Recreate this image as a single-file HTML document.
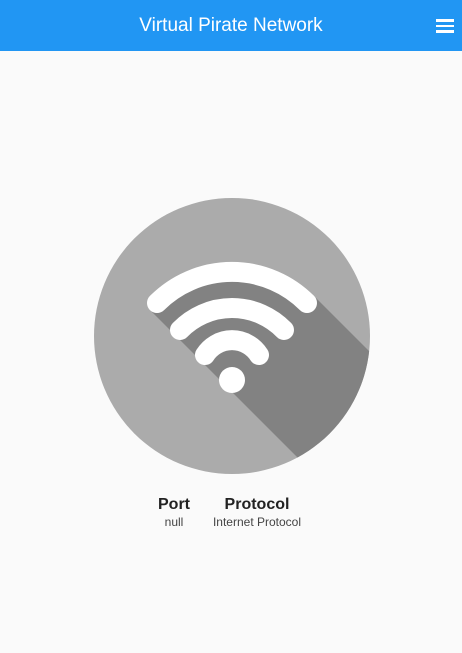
<!DOCTYPE html>
<html><head><style>
body{margin:0;width:462px;height:653px;background:#fafafa;font-family:"Liberation Sans",sans-serif;overflow:hidden;position:relative}
.bar{position:absolute;left:0;top:0;width:462px;height:51px;background:#2196f3;color:#fff;font-size:19px;text-align:center;line-height:51px}
.menu{position:absolute;right:8px;top:19px;width:18px}
.menu div{height:2.5px;background:#fff;margin-bottom:3px}
.col{position:absolute;text-align:center;color:#222}
.col b{display:block;font-size:16px}
.col span{display:block;font-size:12px;color:#444;margin-top:1px}
</style></head><body>
<div class="bar">Virtual Pirate Network<div class="menu"><div></div><div></div><div></div></div></div>
<svg style="position:absolute;left:0;top:0" width="462" height="653">
<defs><clipPath id="c"><circle cx="232" cy="336" r="138"/></clipPath></defs>
<circle cx="232" cy="336" r="138" fill="#ababab"/>
<polygon clip-path="url(#c)" points="150,310 162,298 195,280 232,272 270,280 305,300 314,296 514,496 350,510" fill="#828282"/>
<g fill="none" stroke="#fff" stroke-width="20" stroke-linecap="round">
<path d="M157,303 A106,106 0 0 1 307,303"/>
<path d="M180,330 A72.5,72.5 0 0 1 284,330"/>
<path d="M205,355 A32,32 0 0 1 259,355"/>
</g>
<circle cx="232" cy="380" r="13" fill="#fff"/>
</svg>
<div class="col" style="left:150px;top:496px;width:48px"><b>Port</b><span>null</span></div>
<div class="col" style="left:198px;top:496px;width:118px"><b>Protocol</b><span>Internet Protocol</span></div>
</body></html>
